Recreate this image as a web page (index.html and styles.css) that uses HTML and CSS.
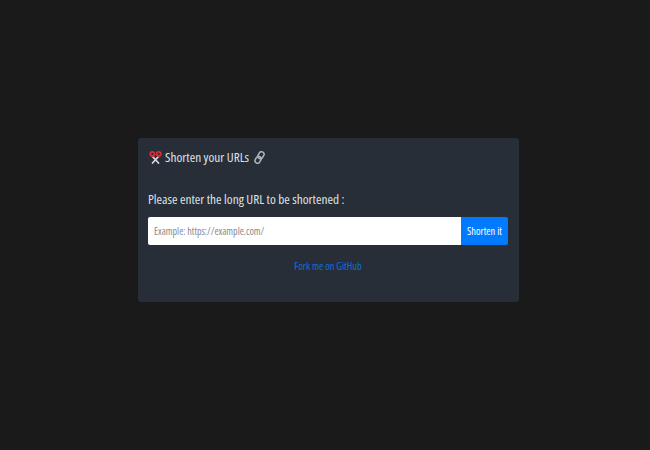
FILE: index.html
```html
<!DOCTYPE html>
<html lang="en">
<head>
<meta charset="utf-8">
<title>Shorten your URLs</title>
<link rel="stylesheet" href="styles.css">
</head>
<body>
<main class="card">
  <h1 class="title">
    <svg class="icon" viewBox="0 0 14 14" aria-hidden="true">
      <path d="M3.4 5.5 10.8 13.6M10.6 5.5 3.2 13.6" stroke="#d3d7da" stroke-width="1.7" fill="none"/>
      <circle cx="3.6" cy="3.2" r="2.2" stroke="#d62f3a" stroke-width="2" fill="none"/>
      <circle cx="10.4" cy="3.2" r="2.2" stroke="#d62f3a" stroke-width="2" fill="none"/>
    </svg>
    <span>Shorten your URLs</span>
    <svg class="icon" viewBox="0 0 14 14" aria-hidden="true">
      <g fill="none" stroke="#aab1b9" stroke-width="1.7" transform="rotate(32 7 7)">
        <rect x="4.3" y="0.2" width="5.4" height="7.8" rx="2.7"/>
        <rect x="4.3" y="6" width="5.4" height="7.8" rx="2.7"/>
      </g>
    </svg>
  </h1>
  <label class="label" for="url">Please enter the long URL to be shortened :</label>
  <form class="row">
    <input id="url" class="input" type="text" placeholder="Example: https://example.com/">
    <button class="button" type="button">Shorten it</button>
  </form>
  <p class="fork"><a href="#">Fork me on GitHub</a></p>
</main>
</body>
</html>
```
FILE: styles.css
```css
* { box-sizing: border-box; }
html, body { height: 100%; }
body {
  margin: 0;
  background: #1a1a1a;
  display: flex;
  align-items: center;
  justify-content: center;
  padding: 0 0 10px 7px;
  font-family: "Open Sans", "Liberation Sans", sans-serif;
  font-stretch: 75%;
  color: #dfe2e5;
}
.card {
  width: 381px;
  height: 164px;
  background: #272e38;
  border-radius: 3px;
  padding: 11px 11px 11px 10px;
}
.title {
  margin: 0 0 26px;
  height: 16px;
  display: flex;
  align-items: center;
  gap: 3px;
  font-size: 13.3px;
  font-weight: 500;
}
.icon { width: 13px; height: 13px; flex: none; margin-left: 1px; }
.label {
  display: block;
  height: 17px;
  margin-bottom: 9px;
  font-size: 13.3px;
  font-weight: 500;
  line-height: 17px;
}
.row { display: flex; height: 28px; }
.input {
  flex: 1;
  min-width: 0;
  border: 0;
  border-radius: 2px 0 0 2px;
  background: #fff;
  padding: 0 6px;
  font: 10px "Open Sans", sans-serif;
  font-stretch: 75%;
}
.input::placeholder { color: #858a90; opacity: 1; }
.button {
  width: 47px;
  border: 0;
  border-radius: 0 2px 2px 0;
  background: #007bff;
  color: #fff;
  padding: 0;
  font: 10.4px "Open Sans", sans-serif;
  font-stretch: 75%;
}
.fork {
  margin: 14px 0 0;
  text-align: center;
  font-size: 10.4px;
  line-height: 14px;
}
.fork a { color: #0f6fdc; text-decoration: none; }
```
